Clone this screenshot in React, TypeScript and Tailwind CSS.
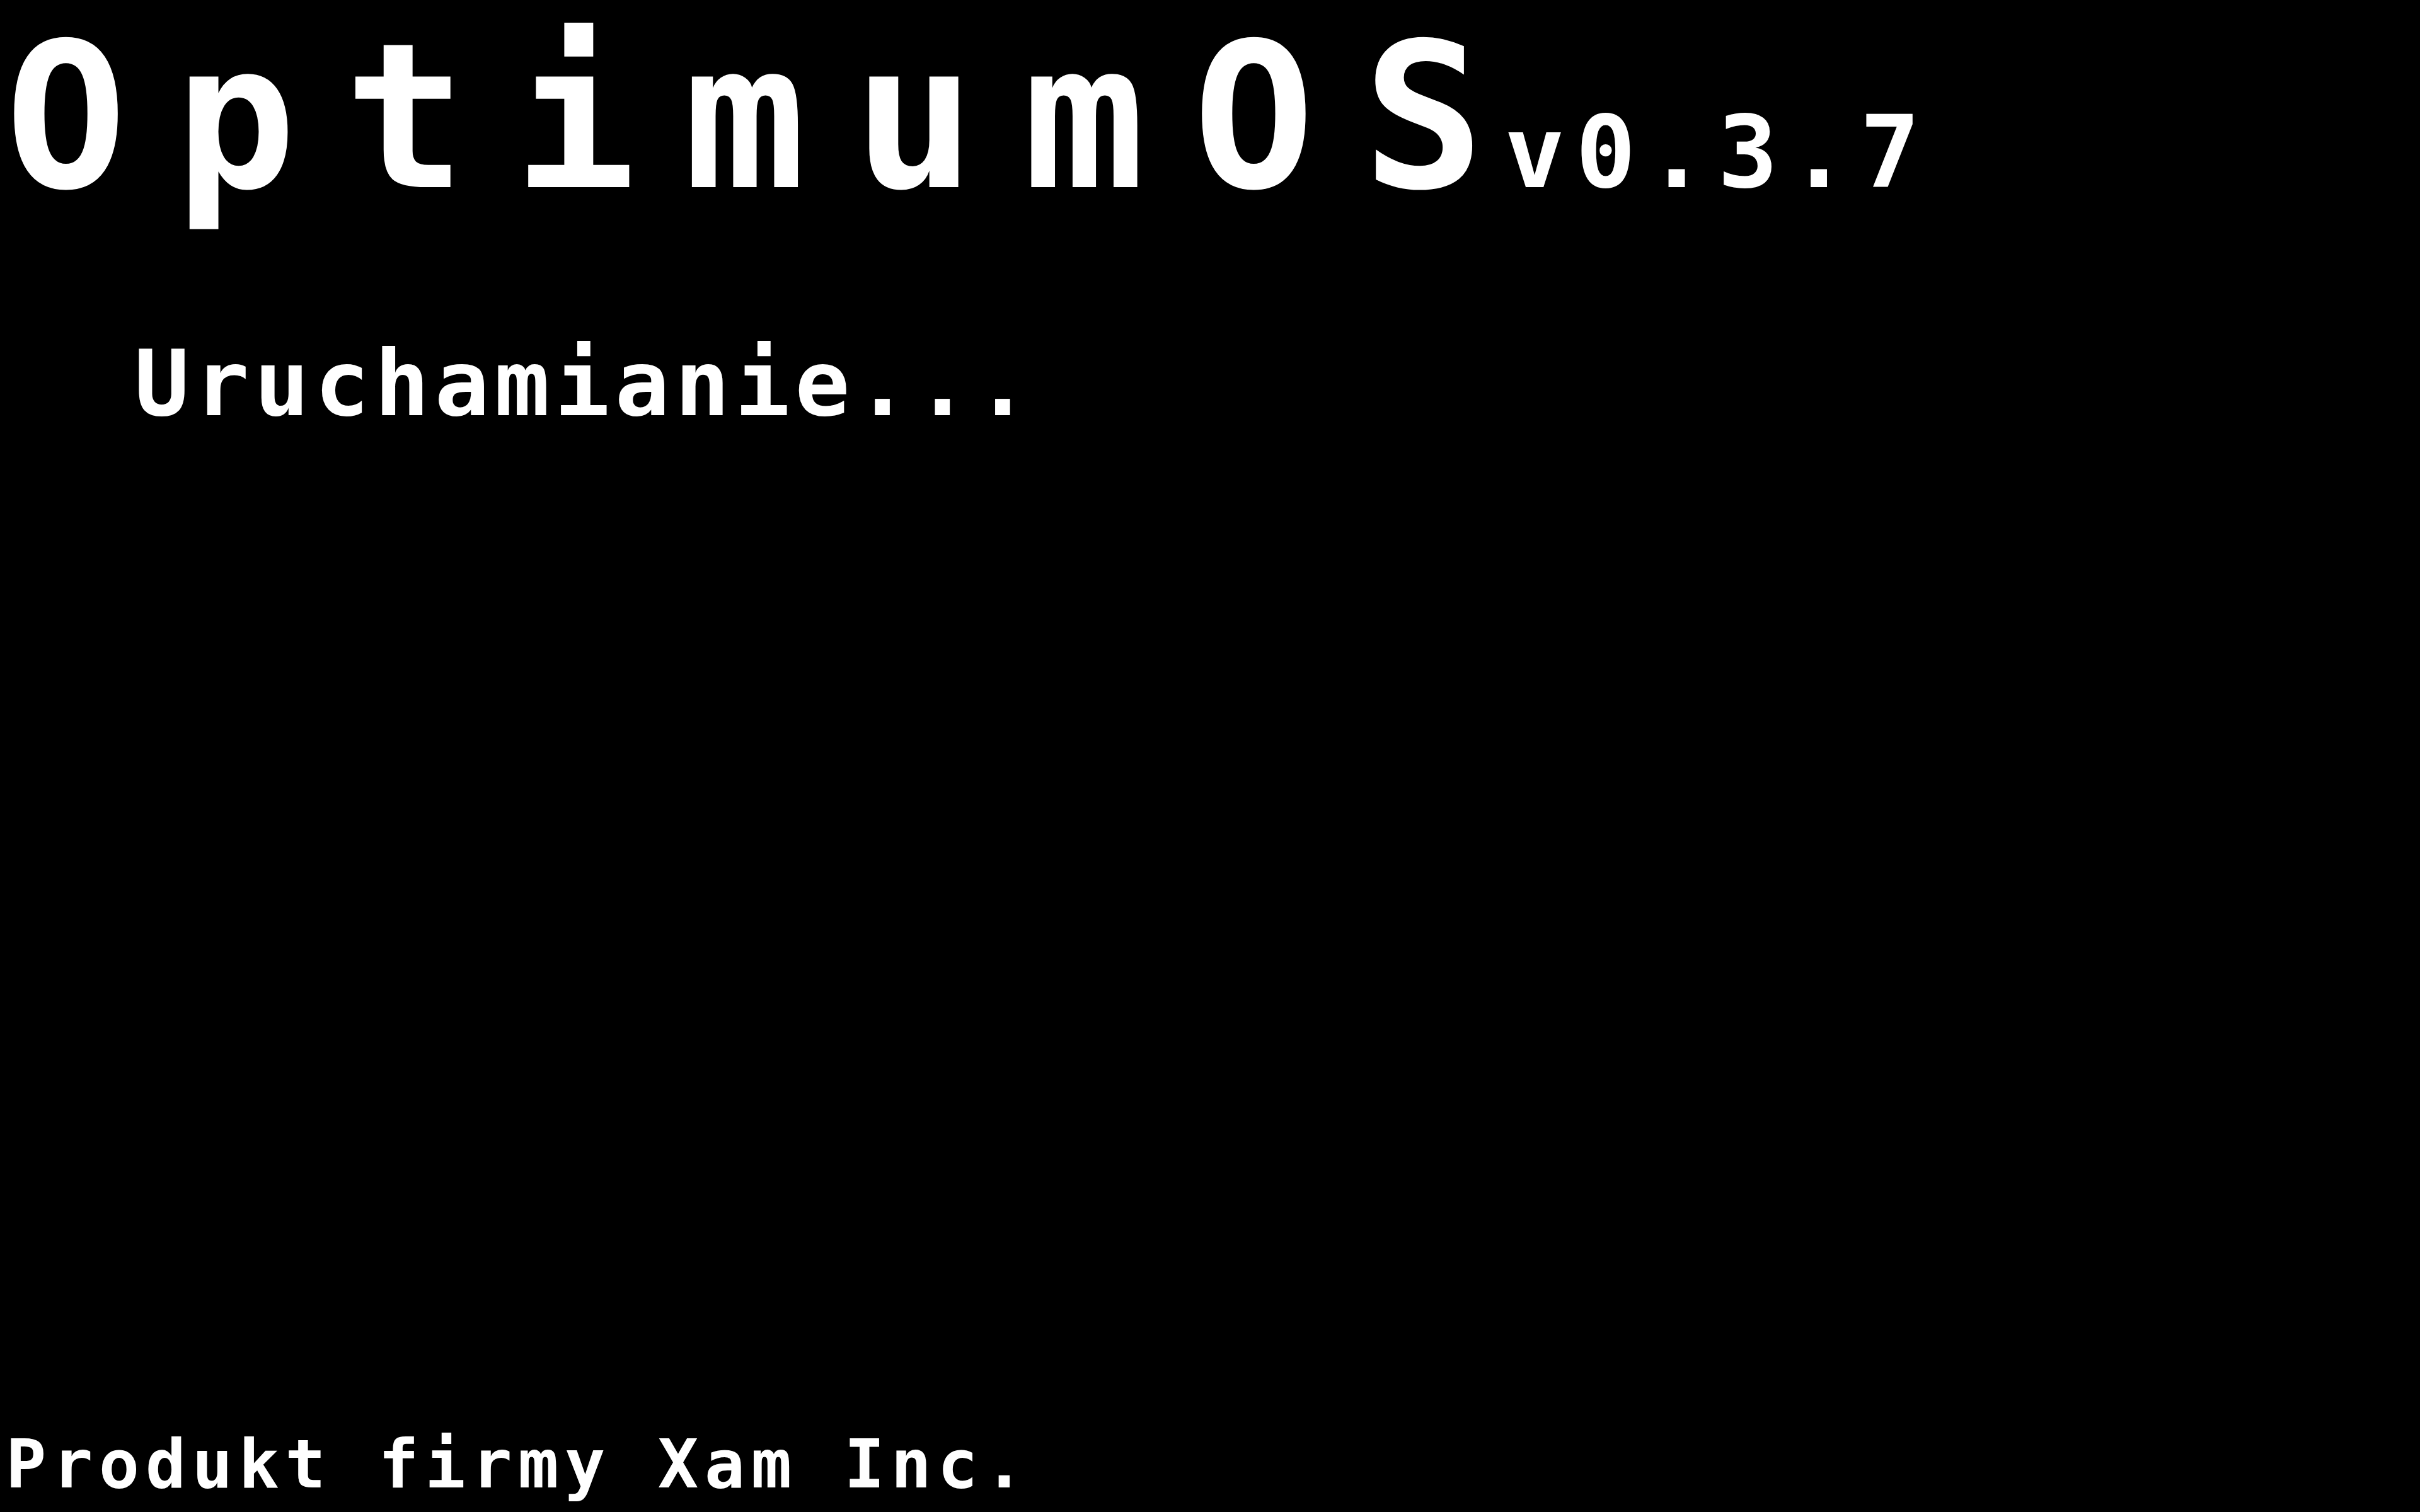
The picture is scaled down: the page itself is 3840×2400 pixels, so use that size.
import React from "react";

export default function App() {
  return (
    <div className="h-screen w-full bg-black text-white flex flex-col font-['DejaVu_Sans_Mono',monospace] font-bold">
      <div className="flex items-baseline pl-[8px]">
        <h1 className="text-[321px] leading-[1.164] tracking-[76px]">
          OptimumO<span className="tracking-normal">S</span>
        </h1>
        <span className="ml-[32px] text-[159px] leading-none tracking-[17px]">v0.3.7</span>
      </div>

      <p className="mt-[162px] ml-[213px] text-[145px] leading-none tracking-[8px]">Uruchamianie...</p>

      <p className="mt-auto pb-[22px] pl-[9px] text-[107px] leading-none tracking-[9.5px]">
        Produkt firmy Xam Inc.
      </p>
    </div>
  );
}
